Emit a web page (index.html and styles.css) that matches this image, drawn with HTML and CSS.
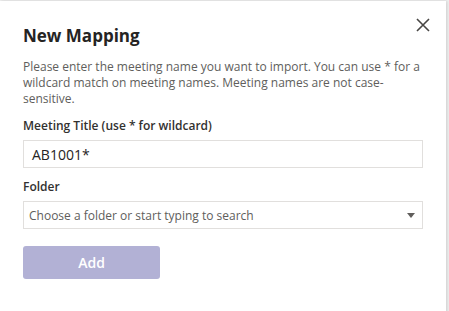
FILE: index.html
```html
<!DOCTYPE html>
<html lang="en">
<head>
  <meta charset="UTF-8">
  <title>New Mapping</title>
  <link rel="stylesheet" href="styles.css">
</head>
<body>
  <div class="dialog">
    <button class="close-btn" aria-label="Close">
      <svg width="14" height="14" viewBox="0 0 14 14">
        <path d="M1 1 L13 13 M13 1 L1 13" stroke="#484644" stroke-width="1.6" fill="none"/>
      </svg>
    </button>
    <h2 class="title">New Mapping</h2>
    <p class="desc">Please enter the meeting name you want to import. You can use * for a wildcard match on meeting names. Meeting names are not case-sensitive.</p>

    <label class="field-label">Meeting Title (use * for wildcard)</label>
    <div class="input">AB1001*</div>

    <label class="field-label">Folder</label>
    <div class="select">
      <span class="placeholder">Choose a folder or start typing to search</span>
      <span class="caret"></span>
    </div>

    <button class="add-btn">Add</button>
  </div>
</body>
</html>
```

FILE: styles.css
```css
body {
  margin: 0;
  background: #efefef;
  font-family: "Open Sans", "Noto Sans", sans-serif;
  overflow: hidden;
}

.dialog {
  position: relative;
  margin-top: 1px;
  width: 446px;
  height: 320px;
  background: #fff;
  box-shadow: 1px 0 3px rgba(0, 0, 0, 0.15);
  padding: 22px 23px 0 23px;
  box-sizing: border-box;
}

.close-btn {
  position: absolute;
  top: 17px;
  right: 16px;
  border: none;
  background: none;
  padding: 0;
  width: 14px;
  height: 14px;
  cursor: pointer;
}
.close-btn svg {
  display: block;
}

.title {
  margin: 0;
  font-size: 17px;
  font-weight: 700;
  color: #252423;
  line-height: 26px;
}

.desc {
  margin: 10px 0 0;
  font-size: 12px;
  line-height: 16px;
  color: #605e5c;
}

.field-label {
  display: block;
  margin-top: 10px;
  font-size: 12px;
  font-weight: 600;
  color: #323130;
  line-height: 18px;
}

.input,
.select {
  margin-top: 5px;
  height: 28px;
  border: 1px solid #e1dfdd;
  box-sizing: border-box;
  display: flex;
  align-items: center;
}

.input {
  padding-left: 8px;
  font-size: 14px;
  color: #252423;
  margin-bottom: 6px;
}

.select {
  padding: 0 7px 0 5px;
  justify-content: space-between;
}
.placeholder {
  font-size: 12px;
  color: #605e5c;
}
.caret {
  width: 0;
  height: 0;
  border-left: 4.5px solid transparent;
  border-right: 4.5px solid transparent;
  border-top: 5px solid #605e5c;
}

.add-btn {
  margin-top: 17px;
  width: 137px;
  height: 33px;
  border: none;
  border-radius: 3px;
  background: #b2b1d5;
  color: #fff;
  font-family: inherit;
  font-size: 14px;
  font-weight: 600;
}
```
